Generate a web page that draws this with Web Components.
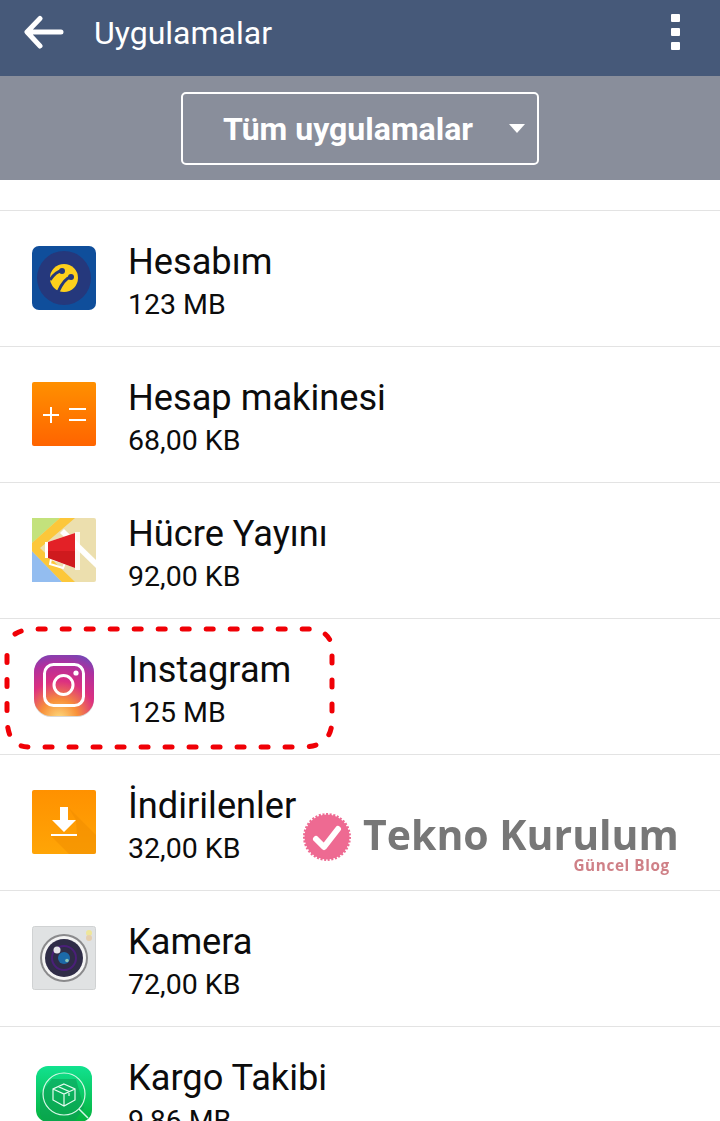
<!DOCTYPE html>
<html lang="tr">
<head>
<meta charset="utf-8">
<title>Uygulamalar</title>
<style>
html, body { margin: 0; height: 1121px; overflow: hidden; background: #fff; font-family: Roboto, sans-serif; }
svg[slot] { display: block; }
</style>
</head>
<body>
<settings-screen>
  <app-bar title="Uygulamalar"></app-bar>
  <filter-bar label="Tüm uygulamalar"></filter-bar>
  <app-list>
    <app-row name="Hesabım" size="123 MB">
      <svg slot="icon" width="64" height="64" viewBox="0 0 64 64">
        <rect width="64" height="64" rx="7" fill="#0f4e9b"/>
        <circle cx="32" cy="32" r="27" fill="#25387c"/>
        <circle cx="32" cy="32" r="14" fill="#fdd01c"/>
        <path d="M18 34C22 28 25 25 30 25M26 46C30 37 34 32 39 31" fill="none" stroke="#25387c" stroke-width="3"/>
        <circle cx="30" cy="25" r="3" fill="#25387c"/>
        <circle cx="39" cy="31" r="3" fill="#25387c"/>
      </svg>
    </app-row>
    <app-row name="Hesap makinesi" size="68,00 KB">
      <svg slot="icon" width="64" height="64" viewBox="0 0 64 64">
        <defs><linearGradient id="calc" x1="0" y1="0" x2="0" y2="1"><stop offset="0" stop-color="#ff9000"/><stop offset="1" stop-color="#ff6400"/></linearGradient></defs>
        <rect width="64" height="64" rx="2" fill="url(#calc)"/>
        <path d="M11 33H27M19 25V41M37 27H54M37 38H54" stroke="#fff" stroke-width="2" fill="none"/>
      </svg>
    </app-row>
    <app-row name="Hücre Yayını" size="92,00 KB">
      <svg slot="icon" width="64" height="64" viewBox="0 0 64 64">
        <rect width="64" height="64" rx="2" fill="#ecdfae"/>
        <path d="M0 0H28L0 25Z" fill="#c3e27c"/>
        <path d="M0 33V64H30Z" fill="#93bdf0"/>
        <path d="M28 0H43L8 30 43 64H30L0 33V25Z" fill="#fcc73a"/>
        <path d="M32 11 64 42V50L28 15Z" fill="#fff"/>
        <path d="M19 41 33 45 31 50 18 46Z" fill="none" stroke="#fff" stroke-width="2"/>
        <path d="M13 24H16L43 15V50L16 40H13Z" fill="#fff"/>
        <path d="M43 14H48V52H43Z" fill="#fff" opacity=".85"/>
        <path d="M16 24 43 15V33H16Z" fill="#e32127"/>
        <path d="M16 33H43V50L16 40Z" fill="#cf1a1e"/>
      </svg>
    </app-row>
    <app-row name="Instagram" size="125 MB">
      <svg slot="icon" width="64" height="64" viewBox="0 0 64 64">
        <defs>
          <radialGradient id="ig" cx="0.42" cy="1.05" r="1.2">
            <stop offset="0" stop-color="#fddc80"/><stop offset="0.26" stop-color="#f8913a"/>
            <stop offset="0.52" stop-color="#dc3080"/><stop offset="0.76" stop-color="#b0309e"/>
            <stop offset="1" stop-color="#5a50c0"/>
          </radialGradient>
        </defs>
        <rect x="2" y="2" width="60" height="61" rx="17" fill="#d8d8d8"/>
        <rect x="2" y="1" width="60" height="61" rx="17" fill="url(#ig)"/>
        <rect x="12.500" y="10.500" width="39" height="41" rx="9" fill="none" stroke="#fff" stroke-width="3"/>
        <circle cx="31.500" cy="31" r="9.500" fill="none" stroke="#fff" stroke-width="3"/>
        <circle cx="44" cy="19" r="2.600" fill="#fff"/>
      </svg>
    </app-row>
    <app-row name="İndirilenler" size="32,00 KB">
      <svg slot="icon" width="64" height="64" viewBox="0 0 64 64">
        <defs><linearGradient id="dl" x1="0" y1="0" x2="0" y2="1"><stop offset="0" stop-color="#ff9100"/><stop offset="1" stop-color="#ffa506"/></linearGradient></defs>
        <rect width="64" height="64" rx="2" fill="url(#dl)"/>
        <path d="M36 17 64 45V62Q64 64 62 64H37L19 46H45L44 30Z" fill="#f08c00" opacity=".5"/>
        <path d="M28 17H36V30H44L32 42 20 30H28Z" fill="#fff"/>
        <rect x="19" y="44" width="26" height="2" fill="#fff"/>
      </svg>
    </app-row>
    <app-row name="Kamera" size="72,00 KB">
      <svg slot="icon" width="64" height="64" viewBox="0 0 64 64">
        <rect x=".5" y=".5" width="63" height="63" rx="2" fill="#e0e2e3" stroke="#d0d2d3"/>
        <circle cx="57" cy="7" r="3" fill="#eee69a"/>
        <circle cx="57" cy="12" r="3" fill="#e6cfae"/>
        <circle cx="32" cy="32" r="24" fill="#8a8a8c"/>
        <circle cx="32" cy="32" r="22" fill="#f4f4f4"/>
        <circle cx="32" cy="32" r="19" fill="#2f2c47"/>
        <circle cx="32" cy="32" r="12" fill="none" stroke="#4a1f78" stroke-width="2"/>
        <circle cx="32" cy="32" r="6" fill="#1c6aa8"/>
        <circle cx="25" cy="24" r="3.500" fill="#e4e4e8"/>
        <circle cx="35" cy="34.500" r="1.800" fill="#8fc4b8"/>
      </svg>
    </app-row>
    <app-row name="Kargo Takibi" size="9,86 MB">
      <svg slot="icon" width="64" height="64" viewBox="0 0 64 64">
        <defs><linearGradient id="kargo" x1="0" y1="0" x2="0" y2="1"><stop offset="0" stop-color="#11e28f"/><stop offset="1" stop-color="#05b13c"/></linearGradient></defs>
        <rect x="4" y="4" width="56" height="56" rx="12" fill="url(#kargo)"/>
        <path d="M20 17 44 17 52 46 42 60H16Q8 60 8 50V32Z" fill="#0d9a55" opacity=".55"/>
        <circle cx="32" cy="32" r="21" fill="none" stroke="#d6f7e6" stroke-width="1.200"/>
        <path d="M47 47 56 56" stroke="#d6f7e6" stroke-width="1.500"/>
        <path d="M32 22 43 27V38L32 44 21 38V27ZM21 27 32 32 43 27M32 32V44M26 24.500 37 29.500V34" fill="none" stroke="#e6fbf0" stroke-width="1.200"/>
      </svg>
    </app-row>
  </app-list>
  <red-outline></red-outline>
  <blog-mark></blog-mark>
</settings-screen>

<script>
class SettingsScreen extends HTMLElement {
  constructor() {
    super();
    this.attachShadow({ mode: 'open' }).innerHTML = `
      <style>
        :host { display: block; position: relative; width: 720px; height: 1121px; overflow: hidden; background: #fff; font-family: Roboto, sans-serif; }
      </style>
      <slot></slot>`;
  }
}

class AppBar extends HTMLElement {
  constructor() {
    super();
    this.attachShadow({ mode: 'open' }).innerHTML = `
      <style>
        :host { display: flex; align-items: center; height: 76px; background: #465979; color: #fff; padding-left: 24px; padding-right: 40px; box-sizing: border-box; }
        .back { display: block; width: 40px; height: 40px; margin-bottom: 8px; }
        h1 { flex: 1; margin: 0 0 10px 30px; font: 400 32px/40px Roboto, sans-serif; }
        .more { display: flex; flex-direction: column; gap: 6px; margin-bottom: 12px; }
        .more i { display: block; width: 9px; height: 8px; border-radius: 1px; background: #fff; }
      </style>
      <svg class="back" viewBox="0 0 40 40">
        <path d="M37 18H5M16 4.500 3 18 16 32" fill="none" stroke="#fff" stroke-width="5" stroke-linecap="round" stroke-linejoin="round"/>
      </svg>
      <h1></h1>
      <div class="more"><i></i><i></i><i></i></div>`;
    this.shadowRoot.querySelector('h1').textContent = this.getAttribute('title');
  }
}

class FilterBar extends HTMLElement {
  constructor() {
    super();
    this.attachShadow({ mode: 'open' }).innerHTML = `
      <style>
        :host { display: flex; justify-content: center; align-items: center; height: 104px; background: #898e9b; }
        .box { position: relative; display: flex; align-items: center; width: 358px; height: 73px; box-sizing: border-box; border: 2px solid #fff; border-radius: 5px; color: #fff; padding-left: 40px; font: 700 32px/40px Roboto, sans-serif; }
        .box span { margin-top: 2px; }
        .arrow { position: absolute; right: 12px; top: 30px; width: 0; height: 0; border-left: 8px solid transparent; border-right: 8px solid transparent; border-top: 9px solid #fff; }
      </style>
      <div class="box"><span></span><div class="arrow"></div></div>`;
    this.shadowRoot.querySelector('span').textContent = this.getAttribute('label');
  }
}

class AppList extends HTMLElement {
  constructor() {
    super();
    this.attachShadow({ mode: 'open' }).innerHTML = `
      <style>
        :host { display: block; padding-top: 30px; }
        .wrap { border-top: 1px solid #e3e3e3; }
      </style>
      <div class="wrap"><slot></slot></div>`;
  }
}

class AppRow extends HTMLElement {
  constructor() {
    super();
    this.attachShadow({ mode: 'open' }).innerHTML = `
      <style>
        :host { display: flex; align-items: center; height: 135px; border-bottom: 1px solid #e3e3e3; color: #0c0c0c; }
        .icon { width: 64px; height: 64px; margin-left: 32px; margin-right: 32px; margin-top: -2px; flex: none; }
        .name { font-size: 36.200px; line-height: 44px; margin-top: 5px; }
        .size { font-size: 28.500px; line-height: 36px; margin-top: 3px; }
      </style>
      <div class="icon"><slot name="icon"></slot></div>
      <div>
        <div class="name"></div>
        <div class="size"></div>
      </div>`;
    this.shadowRoot.querySelector('.name').textContent = this.getAttribute('name');
    this.shadowRoot.querySelector('.size').textContent = this.getAttribute('size');
  }
}

// hand drawn marker round the Instagram row
class RedOutline extends HTMLElement {
  constructor() {
    super();
    this.attachShadow({ mode: 'open' }).innerHTML = `
      <style>
        :host { position: absolute; left: 0; top: 620px; width: 340px; height: 135px; pointer-events: none; }
        svg { display: block; }
      </style>
      <svg width="340" height="135" viewBox="0 0 340 135">
        <path d="M15 14C20 11 22 10 40 9H305C322 9 329 14 332 26V100C332 118 322 126 305 127H30C14 127 8 118 7 100V25" fill="none" stroke="#f00006" stroke-width="5" stroke-linecap="round" stroke-dasharray="7 17"/>
      </svg>`;
  }
}

// semi transparent watermark over the list
class BlogMark extends HTMLElement {
  constructor() {
    super();
    this.attachShadow({ mode: 'open' }).innerHTML = `
      <style>
        :host { position: absolute; left: 302px; top: 812px; display: flex; gap: 11px; pointer-events: none; filter: blur(.4px); }
        svg { display: block; flex: none; }
        .brand { color: #777; font: 700 41px/44px "Open Sans", sans-serif; white-space: nowrap; }
        .sub { color: #cf8087; font: 700 15.300px/18px "Open Sans", sans-serif; letter-spacing: .6px; text-align: right; padding-right: 9px; }
      </style>
      <svg width="50" height="50" viewBox="0 0 50 50">
        <circle cx="25" cy="25" r="22.500" fill="#ee6a92" stroke="#ee6a92" stroke-width="3" stroke-dasharray="2 1.600"/>
        <path d="M14 27 22 35 36 17" fill="none" stroke="#fff" stroke-width="6" stroke-linecap="round" stroke-linejoin="round"/>
      </svg>
      <div>
        <div class="brand">Tekno Kurulum</div>
        <div class="sub">Güncel Blog</div>
      </div>`;
  }
}

customElements.define('settings-screen', SettingsScreen);
customElements.define('app-bar', AppBar);
customElements.define('filter-bar', FilterBar);
customElements.define('app-list', AppList);
customElements.define('app-row', AppRow);
customElements.define('red-outline', RedOutline);
customElements.define('blog-mark', BlogMark);
</script>
</body>
</html>
